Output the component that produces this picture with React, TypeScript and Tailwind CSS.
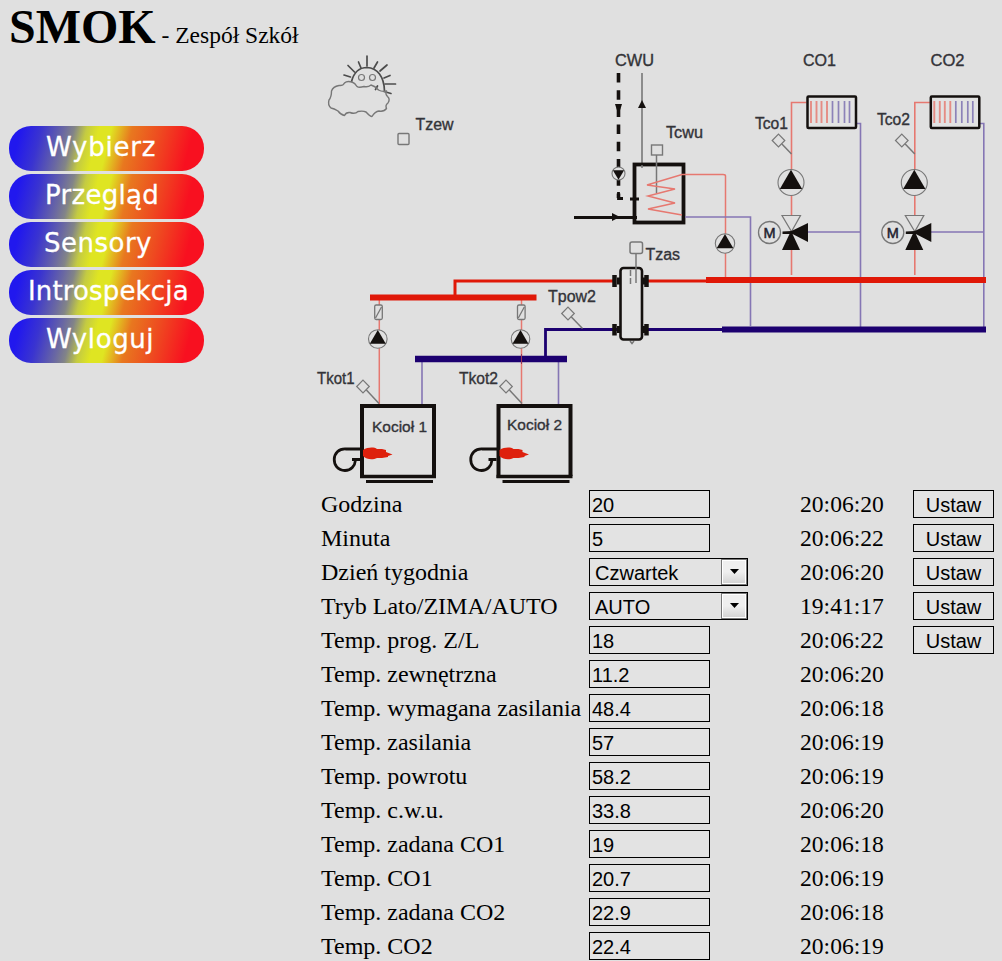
import React from "react";

type Row = { label: string; value: string; time: string; kind?: "select"; set?: boolean };

const rows: Row[] = [
  { label: "Godzina", value: "20", time: "20:06:20", set: true },
  { label: "Minuta", value: "5", time: "20:06:22", set: true },
  { label: "Dzień tygodnia", value: "Czwartek", time: "20:06:20", kind: "select", set: true },
  { label: "Tryb Lato/ZIMA/AUTO", value: "AUTO", time: "19:41:17", kind: "select", set: true },
  { label: "Temp. prog. Z/L", value: "18", time: "20:06:22", set: true },
  { label: "Temp. zewnętrzna", value: "11.2", time: "20:06:20" },
  { label: "Temp. wymagana zasilania", value: "48.4", time: "20:06:18" },
  { label: "Temp. zasilania", value: "57", time: "20:06:19" },
  { label: "Temp. powrotu", value: "58.2", time: "20:06:19" },
  { label: "Temp. c.w.u.", value: "33.8", time: "20:06:20" },
  { label: "Temp. zadana CO1", value: "19", time: "20:06:18" },
  { label: "Temp. CO1", value: "20.7", time: "20:06:19" },
  { label: "Temp. zadana CO2", value: "22.9", time: "20:06:18" },
  { label: "Temp. CO2", value: "22.4", time: "20:06:19" },
];

const menu = [
  { label: "Wybierz", pad: "pl-[37px] tracking-[0.8px]" },
  { label: "Przegląd", pad: "pl-[36px] tracking-[0.3px]" },
  { label: "Sensory", pad: "pl-[35px] tracking-[0.5px]" },
  { label: "Introspekcja", pad: "pl-[19px] tracking-[0.15px]" },
  { label: "Wyloguj", pad: "pl-[37px] tracking-[0.6px]" },
];

const RED = "#e01808";
const NAVY = "#1c0070";
const THIN_RED = "#e67870";
const THIN_BLUE = "#8576b4";
const INK = "#14100e";
const GREY = "#777777";

function Label({ x, y, w, children, size = 16 }: { x: number; y: number; w: number; children: string; size?: number }) {
  return (
    <text x={x} y={y} textLength={w} lengthAdjust="spacingAndGlyphs" fontSize={size} fill="#333338" stroke="#333338" strokeWidth={0.35}>
      {children}
    </text>
  );
}

function Pump({ x, y, r, down = false }: { x: number; y: number; r: number; down?: boolean }) {
  const k = r * 0.86;
  return (
    <g transform={`translate(${x} ${y})${down ? " rotate(180)" : ""}`}>
      <circle r={r} fill="#e0e0e0" stroke={GREY} strokeWidth={1.1} />
      <path d={`M0 ${-r + 0.3}L${k} ${r * 0.5}H${-k}Z`} fill={INK} />
    </g>
  );
}

function Probe({ x, y, dx, dy }: { x: number; y: number; dx: number; dy: number }) {
  return (
    <g fill="none" stroke={GREY} strokeWidth={1.2}>
      <path d={`M${x} ${y - 6.3}L${x + 6.3} ${y}L${x} ${y + 6.3}L${x - 6.3} ${y}Z`} />
      <path d={`M${x + 3.4} ${y + 3.4}L${x + dx} ${y + dy}`} strokeWidth={1.5} />
    </g>
  );
}

function HeatingLoop({ x, tx, ty, label }: { x: number; tx: number; ty: number; label: string }) {
  return (
    <g>
      <path d={`M${x} 275V102.5H${x + 15}`} fill="none" stroke={THIN_RED} strokeWidth={1.6} />
      <path d={`M${x + 64} 123.5H${x + 69}V328M${x + 15} 232H${x + 69}`} fill="none" stroke={THIN_BLUE} strokeWidth={1.6} />
      <rect x={x + 16} y={96.5} width={48.5} height={31.5} rx={1} fill="#e2e2e2" stroke={INK} strokeWidth={2.5} />
      {[19.5, 25, 30, 35.5].map((d) => (
        <path key={d} d={`M${x + d} 101V123`} stroke="#e58c84" strokeWidth={1.9} />
      ))}
      {[41, 47, 53, 58].map((d) => (
        <path key={d} d={`M${x + d} 101V123`} stroke="#8c82b8" strokeWidth={1.7} />
      ))}
      <Label x={tx} y={ty} w={33}>{label}</Label>
      <Probe x={x - 13} y={140.5} dx={13} dy={13.5} />
      <Pump x={x - 0.5} y={182.5} r={13} />
      <path d={`M${x - 9.5} 215.5H${x + 9}L${x} 231.5Z`} fill="#e0e0e0" stroke={GREY} strokeWidth={1.2} />
      <path d={`M${x} 231L${x + 16.5} 223V242L${x + 1} 234L${x + 8.5} 250H${x - 9.5}L${x - 2} 234H${x - 9}V231.5Z`} fill={INK} />
      <circle cx={x - 22} cy={232.5} r={11} fill="none" stroke={GREY} strokeWidth={1.3} />
      <text x={x - 22} y={238} textAnchor="middle" fontSize={14.5} fill="#222230" stroke="#222230" strokeWidth={0.5}>M</text>
    </g>
  );
}

function Boiler({ x, label, lx, ly }: { x: number; label: string; lx: number; ly: number }) {
  return (
    <g>
      <path d={`M${x + 2} 478V406H${x + 74}V476`} fill="none" stroke={INK} strokeWidth={4} />
      <path d={`M${x} 476.5H${x + 76}`} stroke={INK} strokeWidth={3.5} />
      <path d={`M${x + 6} 481.5H${x + 73}`} stroke={INK} strokeWidth={2.8} />
      <path d={`M${x + 1} 449H${x - 14}C${x - 29} 448 ${x - 30} 470 ${x - 15} 470.5C${x - 9} 470.5 ${x - 5} 466 ${x - 4.5} 460M${x - 8} 459.5H${x}`} fill="none" stroke={INK} strokeWidth={2.8} />
      <path d={`M${x + 3} 450C${x + 8} 447 ${x + 14} 447 ${x + 17} 449L${x + 22} 449L${x + 26} 450V452L${x + 32.5} 454.5L${x + 28} 456V457L${x + 22} 458L${x + 17} 458C${x + 13} 460 ${x + 7} 460 ${x + 3} 456Z`} fill="#de200c" />
      <Label x={lx} y={ly} w={55} size={15.5}>{label}</Label>
    </g>
  );
}

function CheckValve({ x }: { x: number }) {
  return (
    <g fill="#e0e0e0" stroke={GREY} strokeWidth={1.3}>
      <rect x={x - 3.8} y={305} width={7.6} height={14.5} rx={1.5} />
      <path d={`M${x + 3} 307L${x - 3} 318`} />
    </g>
  );
}

function Diagram() {
  return (
    <svg className="block h-[437px] w-[686px]" viewBox="316 50 686 437" fontFamily="'Liberation Sans', Arial, sans-serif">
      {/* weather */}
      <g fill="none" stroke="#4c4c4c" strokeWidth={1.7} strokeLinecap="round" strokeLinejoin="round">
        <path d="M351.5 81.500C354 72 360 67.500 367 67.500C377 68 384 76 384.500 91" />
        <path d="M367 66V56M361 68L358.500 62M374 68L377.500 62M354.500 72L348 65.500M380 71L387 65M350.500 77L344 75M384 78L390 75.500M385 84H395.500M384 91.500L391 93.500M377.500 86L375.500 89.500" />
        <circle cx={361.500} cy={77.500} r={3} stroke={GREY} strokeWidth={1.200} />
        <circle cx={372.500} cy={77.500} r={3} stroke={GREY} strokeWidth={1.200} />
        <path
          stroke={GREY}
          strokeWidth={1.400}
          d="M352 82Q347 80.500 344.500 83Q343 86 339 85.500Q333 86.500 331.500 91Q331.500 97 329 100Q327.500 105 331 108Q334 108.500 338 111Q341 115 344.500 115.500Q346 112 350 112.500Q355 114.500 358 111.500Q363 110.500 366 112Q370 116.500 372 116.500Q375 111.500 379 111Q384 112 386.500 108.500Q385 105 388 103Q390.500 99 387.500 96.500Q385 94 386.500 91Q382 92 378.500 90Q375 86 371 85Q368 87.500 364 86.500Q359 88 357 86.500Q355 83 352 82Z"
        />
      </g>
      <rect x={398} y={133.500} width={11} height={11} rx={1} fill="none" stroke={GREY} strokeWidth={1.400} />
      <Label x={415.500} y={130} w={38}>Tzew</Label>

      {/* hot water tank */}
      <Label x={615} y={66} w={39}>CWU</Label>
      <path d="M618.500 73V198" stroke={INK} strokeWidth={3.600} strokeDasharray="9.500 7.700" />
      <path d="M618.500 192V198.500H623M630 199H639" fill="none" stroke={INK} strokeWidth={2.800} />
      <path d="M615 104H622L618.500 115Z" fill={INK} />
      <path d="M642 73V166" stroke={GREY} strokeWidth={1.600} />
      <path d="M642 100L646 108H638Z" fill={INK} />
      <Pump x={618.500} y={173.500} r={6.500} down />
      <rect x={634.500} y={164.500} width={49} height={58} fill="none" stroke={INK} strokeWidth={3.800} />
      <path d="M642 165V168M656.500 155V193" stroke={GREY} strokeWidth={1.500} />
      <rect x={651.500} y={145} width={11} height={10} fill="none" stroke={GREY} strokeWidth={1.400} />
      <path d="M574 217.500H637" stroke={INK} strokeWidth={3} />
      <path d="M612 213L620 217L612 221Z" fill={INK} />
      <path d="M725.500 277V176Q725.500 174.500 723 174.500H682L647 185L675 189L648 196L675 203L648 209L682 215" fill="none" stroke={THIN_RED} strokeWidth={1.500} />
      <path d="M685 217H750.500V326" fill="none" stroke={THIN_BLUE} strokeWidth={1.600} />
      <Label x={666} y={138} w={37}>Tcwu</Label>
      <Pump x={725} y={243.500} r={9.700} />

      {/* heating loops */}
      <Label x={803} y={66} w={33}>CO1</Label>
      <Label x={930.500} y={66} w={34}>CO2</Label>
      <HeatingLoop x={791.500} tx={755} ty={129} label="Tco1" />
      <HeatingLoop x={914.800} tx={877} ty={124.500} label="Tco2" />

      {/* boiler circuits */}
      <path d="M379.300 300V404M521.500 300V404" stroke={THIN_RED} strokeWidth={1.500} />
      <path d="M422 361V404M558.500 361V404" stroke={THIN_BLUE} strokeWidth={1.600} />
      <path d="M415 359H567" stroke={NAVY} strokeWidth={6.300} />
      <path d="M521.500 354V364" stroke="#9b3554" strokeWidth={1} />
      <path d="M545.500 357V329.500H618M645 329.500H724" fill="none" stroke={NAVY} strokeWidth={2.800} />
      <path d="M722 329.500H986" stroke={NAVY} strokeWidth={6} />
      <path d="M455 296V281H616M645 281H708" fill="none" stroke={RED} strokeWidth={3} />
      <path d="M370 297.500H536.500M706 280H986" stroke={RED} strokeWidth={6} />
      <CheckValve x={378.500} />
      <CheckValve x={521.300} />
      <Pump x={377.800} y={339} r={9.300} />
      <Pump x={520.500} y={339} r={9.300} />
      <Label x={317} y={384} w={37.500}>Tkot1</Label>
      <Label x={459} y={384} w={39}>Tkot2</Label>
      <Probe x={363} y={386.500} dx={16} dy={17} />
      <Probe x={506} y={386.500} dx={16} dy={17} />
      <Label x={548} y={302} w={48}>Tpow2</Label>
      <Probe x={568} y={313.500} dx={14.500} dy={15} />

      {/* hydraulic separator */}
      <path d="M630 341L632 343.500L634 341" fill="none" stroke={GREY} strokeWidth={1.500} />
      <rect x={620.500} y={268} width={21.500} height={71.500} rx={3} fill="#e3e3e3" stroke={INK} strokeWidth={2.600} />
      <path d="M614.500 275V287M614.500 324V335.500M646.500 275V287M646.500 324V335.500" stroke={INK} strokeWidth={4.500} />
      <path d="M617 281H620M617 329.500H620M642.500 281H645M642.500 329.500H645" stroke={INK} strokeWidth={7} />
      <path d="M630.500 270V285" stroke={GREY} strokeWidth={1.500} strokeDasharray="6 2" />
      <path d="M636 254V283" stroke={GREY} strokeWidth={1.500} />
      <rect x={630} y={242} width={12.500} height={11.500} rx={2} fill="#e0e0e0" stroke={GREY} strokeWidth={1.500} />
      <Label x={645.500} y={260} w={34.500}>Tzas</Label>

      <Boiler x={360} label="Kocioł 1" lx={372} ly={431.500} />
      <Boiler x={496.500} label="Kocioł 2" lx={507} ly={429.500} />
    </svg>
  );
}

export default function App() {
  return (
    <div className="h-[961px] w-[1002px] overflow-hidden bg-[#e0e0e0] font-['Liberation_Serif','Times_New_Roman',serif] text-black">
      <header className="flex h-[50px] items-baseline pl-[9px] whitespace-pre">
        <h1 className="text-[48px] leading-[54px] font-bold">SMOK</h1>
        <span className="text-[23.500px]"> - Zespół Szkół</span>
      </header>
      <div className="flex">
        <nav className="flex w-[316px] shrink-0 flex-col gap-[3px] pt-[76px] pl-[9px]">
          {menu.map((m) => (
            <button
              key={m.label}
              className={`h-[45px] w-[195px] rounded-[22px] bg-[linear-gradient(104deg,#2118ee_6%,#3a34d0_16%,#6a68a2_27%,#828488_32%,#c4cb42_38%,#dfe522_44%,#dfe522_50%,#e8781f_60%,#ee4a20_74%,#f81020_90%)] pb-[3px] text-left font-['DejaVu_Sans',sans-serif] text-[26px] leading-[42px] text-white [-webkit-text-stroke:0.3px_white] ${m.pad}`}
            >
              {m.label}
            </button>
          ))}
        </nav>
        <main className="w-[686px]">
          <Diagram />
          <div className="flex flex-col gap-1.5 pt-[3px] pl-[5px]">
            {rows.map((r) => (
              <div key={r.label} className="flex h-7">
                <div className="w-[268px] text-[24px] leading-7 whitespace-nowrap">{r.label}</div>
                <div className="w-[211px] font-['Liberation_Sans',Arial,sans-serif] text-[20px] leading-[28px]">
                  {r.kind === "select" ? (
                    <div className="flex h-7 w-[159px] justify-between border border-black bg-[#e3e3e3] pl-[5px]">
                      <span>{r.value}</span>
                      <span className="flex h-[26px] w-[26px] items-center justify-center border border-[#777] bg-linear-to-b from-[#efefef] from-50% to-[#d2d2d2] shadow-[inset_0_0_0_1px_#fff]">
                        <svg className="mb-0.5 h-[5px] w-[9px]" viewBox="0 0 9 5">
                          <path d="M0 0H9L4.500 5Z" />
                        </svg>
                      </span>
                    </div>
                  ) : (
                    <input
                      readOnly
                      value={r.value}
                      className="block h-7 w-[121px] border border-black bg-[#e3e3e3] px-[2px] pt-[2px] outline-none"
                    />
                  )}
                </div>
                <time className="w-[113px] text-[23.600px] leading-7">{r.time}</time>
                {r.set && (
                  <button className="h-7 w-[81px] border border-black bg-[#e3e3e3] pt-px font-['Liberation_Sans',Arial,sans-serif] text-[20px] leading-[26px]">
                    Ustaw
                  </button>
                )}
              </div>
            ))}
          </div>
        </main>
      </div>
    </div>
  );
}
